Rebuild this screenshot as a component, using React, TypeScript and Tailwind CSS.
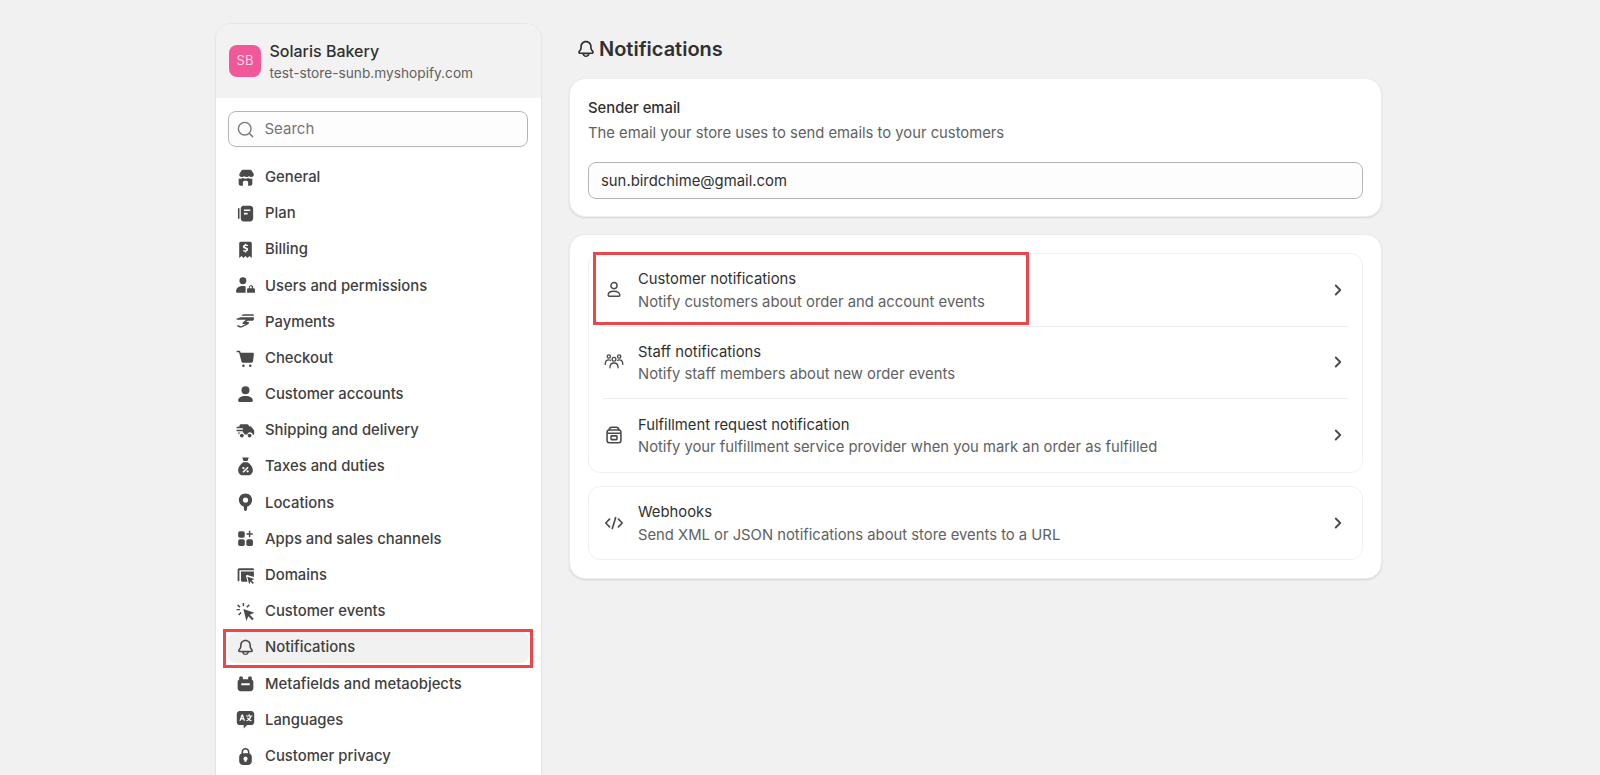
import React from 'react';
import { ChevronRight, Search } from 'lucide-react';

type IconProps = { className?: string };

const Svg = ({ className = 'size-[21px]', children }: IconProps & { children: React.ReactNode }) => (
  <svg viewBox="0 0 20 20" fill="currentColor" fillRule="evenodd" clipRule="evenodd" className={className}>
    {children}
  </svg>
);

const StoreIcon = () => (
  <Svg>
    <path d="M5.600 2.500h8.800c.6 0 1.100.3 1.400.8l2.100 3.400c.3 1.600-.8 2.900-2.300 2.900-.9 0-1.700-.4-2.200-1.100-.5.7-1.400 1.100-2.400 1.100s-1.900-.4-2.400-1.100c-.5.7-1.300 1.100-2.200 1.100-1.500 0-2.600-1.300-2.300-2.900l2.100-3.400c.3-.5.8-.8 1.400-.8Z" />
    <path d="M3.500 11c.5.200 1 .3 1.600.3.900 0 1.700-.3 2.400-.8.700.5 1.600.8 2.500.8s1.800-.3 2.500-.8c.7.500 1.500.8 2.400.8.600 0 1.100-.1 1.600-.3v5c0 1-.8 1.800-1.800 1.800h-2.200v-3.300c0-.8-.7-1.500-1.500-1.500h-2c-.8 0-1.500.7-1.500 1.500v3.300H5.300c-1 0-1.800-.8-1.800-1.800v-5Z" />
  </Svg>
);

const PlanIcon = () => (
  <Svg>
    <path d="M2.800 5.500c0-.4.300-.8.800-.8s.7.400.7.800v9c0 .4-.300.800-.7.800s-.8-.4-.8-.8v-9Z" />
    <path d="M8 2.500h6.500c1.500 0 2.800 1.300 2.800 2.800v9.400c0 1.500-1.300 2.800-2.800 2.800H8c-1.500 0-2.500-1.300-2.500-2.800V5.300c0-1.500 1-2.800 2.500-2.800Zm.500 3.700v1.500h6V6.200h-6Zm0 3.200v1.500h3.500V9.400H8.500Z" />
  </Svg>
);

const BillingIcon = () => (
  <Svg>
    <path d="M5.500 2.500h9c.8 0 1.500.7 1.500 1.500v14l-2.200-1.800-1.900 1.800-1.900-1.800-1.900 1.800-1.900-1.800L4 18V4c0-.8.700-1.500 1.500-1.500Zm3.900 2v.9c-1.100.2-1.900 1-1.900 2 0 1.200 1 1.700 2.100 2 .9.300 1.100.4 1.100.8 0 .3-.3.500-.8.500H7.700v1.300h1.700v.9h1.300v-.9c1.100-.2 1.800-1 1.800-2 0-1.300-1-1.700-2.100-2.100-.9-.3-1.100-.4-1.100-.7 0-.3.300-.5.800-.5h2.200V5.400h-1.600v-.9H9.400Z" />
  </Svg>
);

const UsersIcon = () => (
  <Svg>
    <circle cx="7.500" cy="5.500" r="3.300" />
    <path d="M1 15.500c0-2.900 2.400-5 6.500-5 1 0 1.900.1 2.600.4V17H2.500c-.8 0-1.500-.6-1.500-1.500Z" />
    <path d="M15 9.500c1.300 0 2.300 1 2.300 2.300v.7h.4c.7 0 1.300.5 1.300 1.200V17h-7.500v-3.300c0-.7.600-1.200 1.300-1.200h.4v-.7c0-1.300 1-2.300 2.300-2.300Zm0 1.300c-.5 0-1 .4-1 1v.7h2v-.7c0-.6-.5-1-1-1Z" />
  </Svg>
);

const PaymentsIcon = () => (
  <Svg>
    <path d="M6.500 4c.3-.6.900-1 1.600-1h8.600c.8 0 1.300.5 1.300 1.300v.3H6.300l.2-.6Z" />
    <path d="M5.300 6h12.700v1.800c0 .8-.6 1.400-1.400 1.400h-4.500l-1.400 1.300h1.900c.7 0 1 .6.700 1.200-.4.800-1.200 1.300-2.100 1.600l-4.300 2.200c-.8.400-1.700.4-2.500.1l-2.400-1L2.500 13.300l2.500 1.100c.5.200 1 .2 1.500-.1l3.800-1.900H7.200v-1.300l3.200-2.700H1.500V7.300L5.300 6Z" />
  </Svg>
);

const CartIcon = () => (
  <Svg>
    <path d="M1.500 2.500h2.200c.7 0 1.300.5 1.500 1.200l.2.800h11.600c.6 0 1 .5 1 1.100l-.8 6.800c-.1.900-.9 1.600-1.800 1.600H7.700c-.7 0-1.300-.5-1.500-1.200L3.800 4h-2.300V2.500Z" />
    <circle cx="8" cy="16.800" r="1.200" />
    <circle cx="14.500" cy="16.800" r="1.200" />
  </Svg>
);

const PersonIcon = () => (
  <Svg>
    <circle cx="10" cy="6" r="3.800" />
    <path d="M3 15.800c0-2.500 2.700-4.300 7-4.300s7 1.800 7 4.300c0 .9-.6 1.400-1.300 1.400H4.300c-.7 0-1.300-.5-1.300-1.400Z" />
  </Svg>
);

const TruckIcon = () => (
  <Svg>
    <path d="M5.500 4h6.200c.8 0 1.500.7 1.500 1.500v.5h1.100c.6 0 1.100.3 1.400.7l2.300 2.800c.2.300.3.600.3.900v2.600c0 .6-.5 1-1 1h-.3a2.700 2.700 0 0 0-5.300-.2H9.100a2.700 2.700 0 0 0-5.300 0c-.4-.1-.7-.6-.7-1.100V12h4.400v-1.400H1.500V9.200h6V7.800h-6V6.400h2.600c0-1 .6-2.400 1.400-2.400Z" />
    <circle cx="6.500" cy="14.800" r="1.800" />
    <circle cx="13.900" cy="14.800" r="1.800" />
  </Svg>
);

const TaxIcon = () => (
  <Svg>
    <path d="M7.500 1.500h5c.4 0 .6.400.4.700l-1 2.500H8.100l-1-2.500c-.2-.3 0-.7.400-.7Z" />
    <path d="M7.900 6h4.200C14.600 7.800 17 10.400 17 13.500c0 2.700-1.900 4.800-4.500 4.800h-5C4.900 18.300 3 16.200 3 13.500c0-3.100 2.400-5.700 4.900-7.500Zm4 4.200-4.800 4.800 1 1 4.800-4.800-1-1Zm-3.900.2a1.100 1.100 0 1 0 0 2.200 1.100 1.100 0 0 0 0-2.200Zm4 3.100a1.100 1.100 0 1 0 0 2.200 1.100 1.100 0 0 0 0-2.200Z" />
  </Svg>
);

const PinIcon = () => (
  <Svg>
    <path d="M10 1.500c3.600 0 6.300 2.700 6.300 6.100 0 3.100-2.100 5.300-4.800 6.500v2.100c0 .8-.7 2-1.500 2s-1.500-1.200-1.500-2v-2.100C5.800 12.900 3.700 10.700 3.700 7.600c0-3.400 2.700-6.100 6.300-6.100Zm0 3.700a2.500 2.500 0 1 0 0 5 2.500 2.500 0 0 0 0-5Z" />
  </Svg>
);

const AppsIcon = () => (
  <Svg>
    <rect x="3" y="3" width="6.300" height="6.300" rx="1.700" />
    <rect x="3" y="10.800" width="6.300" height="6.300" rx="1.700" />
    <rect x="10.800" y="10.800" width="6.300" height="6.300" rx="1.700" />
    <path d="M13.200 2.700h1.400V5h2.300v1.400h-2.300v2.300h-1.400V6.400h-2.300V5h2.300V2.700Z" />
  </Svg>
);

const DomainsIcon = () => (
  <Svg>
    <path d="M2.500 4.500c0-.8.700-1.500 1.500-1.500h13c.6 0 1 .4 1 1v1H4.200v9.500c0 .6-.4 1-.8 1-.5 0-.9-.4-.9-1v-10Z" />
    <path d="M5.700 6.300h12.300v5.200l-6.300-1.900c-.7-.2-1.400.5-1.200 1.200l1.400 5.200H7.200c-.8 0-1.500-.7-1.500-1.500V6.300Z" />
    <path d="m11.800 11.200 6.700 2.200-2.800 1.300 2.300 2.200-1.100 1.100-2.200-2.300-1.200 2.800-1.700-7.300Z" />
  </Svg>
);

const EventsIcon = () => (
  <Svg>
    <path d="m8 7.500 10.500 3.800-4.400 1.900 3.700 3.700-1.400 1.400-3.700-3.700-1.900 4.400L8 7.500Z" />
    <path d="M7.300 1.800h1.400v3.200H7.300V1.800ZM1.500 7.500h3.200v1.400H1.500V7.500ZM3 3.200l2.300 2.300-1 1L2 4.200l1-1Zm10 0 1 1-2.300 2.300-1-1L13 3.200ZM5.300 10.500l1 1L4 13.800l-1-1 2.300-2.300Z" />
  </Svg>
);

const BellIcon = ({ className }: IconProps) => (
  <Svg className={className}>
    <path d="M10 2.500c-3 0-5.200 2.300-5.200 5.100v1.300c0 .7-.3 1.300-.7 1.800l-.9 1.100c-.9 1.100-.1 2.700 1.300 2.700h2.200c.2 1.500 1.600 2.700 3.300 2.700s3.100-1.200 3.300-2.700h2.200c1.400 0 2.200-1.600 1.300-2.700l-.9-1.100c-.4-.5-.7-1.100-.7-1.800V7.600c0-2.800-2.200-5.100-5.200-5.100Zm0 1.500c-2.100 0-3.700 1.600-3.700 3.600v1.300c0 1-.4 2-1 2.800l-.9 1c-.1.200 0 .4.200.4h10.800c.2 0 .3-.2.200-.4l-.9-1c-.6-.8-1-1.800-1-2.800V7.600c0-2-1.600-3.600-3.700-3.600ZM8.300 14.800c.2.700.9 1.200 1.700 1.200s1.500-.5 1.700-1.200H8.300Z" />
  </Svg>
);

const MetaIcon = () => (
  <Svg>
    <path d="M5.700 3c1 0 1.800.7 1.800 1.700V6h5V4.700c0-1 .8-1.700 1.800-1.700s1.700.7 1.700 1.700v1.400c.8.400 1.500 1.200 1.500 2.200v6.200c0 1.500-1.300 2.800-2.800 2.800H5.300c-1.500 0-2.800-1.300-2.800-2.800V8.300c0-1 .6-1.800 1.500-2.200V4.700C4 3.700 4.800 3 5.700 3Zm.3 6.800v1.900h8V9.800H6Z" />
  </Svg>
);

const LanguageIcon = () => (
  <Svg>
    <path d="M4.500 2h11C17 2 18.300 3.300 18.300 4.800v7.700c0 1.500-1.300 2.800-2.800 2.800h-4L8.300 18.500v-3.200H4.500c-1.500 0-2.800-1.300-2.800-2.800V4.800C1.700 3.300 3 2 4.500 2Zm1.700 3.200-2 6h1.300l.4-1.200h2l.4 1.200h1.300l-2-6H6.200Zm.7 1.900.6 1.500H6.300l.6-1.500Zm6.100-2v1h-2.500v1.100h3.700c-.2.800-.6 1.400-1 1.900-.4-.3-.7-.7-1-1.100l-.9.500c.3.500.7 1 1.100 1.400-.5.300-1 .6-1.700.8l.4 1c.9-.3 1.600-.7 2.200-1.100.6.500 1.300.8 2.200 1.100l.4-1c-.7-.2-1.200-.5-1.700-.8.7-.7 1.200-1.600 1.400-2.700h.9V6.100H14v-1h-1Z" />
  </Svg>
);

const LockIcon = () => (
  <Svg>
    <path d="M10 1.800c2.200 0 3.800 1.700 3.800 3.800v1.600c1.300.5 2.200 1.700 2.200 3.100v4.200c0 1.900-1.600 3.500-3.500 3.500h-5C5.600 18 4 16.400 4 14.500v-4.200c0-1.400.9-2.600 2.200-3.100V5.600c0-2.100 1.600-3.800 3.800-3.800Zm0 1.500c-1.300 0-2.300 1-2.300 2.300V7h4.600V5.600c0-1.300-1-2.300-2.300-2.300ZM10 10a2 2 0 0 0-1 3.700v1.300h2v-1.300A2 2 0 0 0 10 10Z" />
  </Svg>
);

const PersonOutline = () => (
  <svg viewBox="0 0 20 20" fill="none" stroke="currentColor" strokeWidth="1.300" className="size-[22px]">
    <circle cx="10" cy="6" r="2.800" />
    <path d="M4.700 14.500c0-2 2.200-3.300 5.300-3.300s5.300 1.300 5.300 3.300c0 .8-.4 1.200-1 1.200H5.700c-.6 0-1-.4-1-1.200Z" />
  </svg>
);

const TeamOutline = () => (
  <svg viewBox="0 0 20 20" fill="none" stroke="currentColor" strokeWidth="1.200" strokeLinecap="round" className="size-[22px]">
    <circle cx="5.300" cy="5" r="1.500" />
    <circle cx="14.700" cy="5" r="1.500" />
    <circle cx="10" cy="7.500" r="1.700" />
    <path d="M2 12.200c0-2.300 1.200-4.200 3.300-4.200.5 0 1 .1 1.400.4M18 12.200c0-2.300-1.200-4.200-3.300-4.200-.5 0-1 .1-1.400.4" />
    <path d="M6.300 15.200c0-2.500 1.500-4.300 3.700-4.300s3.700 1.800 3.700 4.300" />
  </svg>
);

const FulfillOutline = () => (
  <svg viewBox="0 0 20 20" fill="none" stroke="currentColor" strokeWidth="1.400" className="size-[22px]">
    <rect x="3.700" y="5.500" width="12.600" height="11.500" rx="2" />
    <path d="M5.500 6c0-1.800 1.200-3 2.500-3h4c1.300 0 2.500 1.200 2.500 3M3.700 8.500h12.600" />
    <rect x="7.300" y="10.800" width="5.400" height="3.400" rx=".5" />
  </svg>
);

const CodeOutline = () => (
  <svg viewBox="0 0 20 20" fill="none" stroke="currentColor" strokeWidth="1.500" strokeLinecap="round" strokeLinejoin="round" className="size-[22px]">
    <path d="M6 6.500 2.500 10 6 13.500M14 6.500l3.500 3.500-3.500 3.500M11.500 5 8.500 15" />
  </svg>
);

const navItems = [
  { label: 'General', icon: <StoreIcon /> },
  { label: 'Plan', icon: <PlanIcon /> },
  { label: 'Billing', icon: <BillingIcon /> },
  { label: 'Users and permissions', icon: <UsersIcon /> },
  { label: 'Payments', icon: <PaymentsIcon /> },
  { label: 'Checkout', icon: <CartIcon /> },
  { label: 'Customer accounts', icon: <PersonIcon /> },
  { label: 'Shipping and delivery', icon: <TruckIcon /> },
  { label: 'Taxes and duties', icon: <TaxIcon /> },
  { label: 'Locations', icon: <PinIcon /> },
  { label: 'Apps and sales channels', icon: <AppsIcon /> },
  { label: 'Domains', icon: <DomainsIcon /> },
  { label: 'Customer events', icon: <EventsIcon /> },
  { label: 'Notifications', icon: <BellIcon className="size-[21px]" />, active: true },
  { label: 'Metafields and metaobjects', icon: <MetaIcon /> },
  { label: 'Languages', icon: <LanguageIcon /> },
  { label: 'Customer privacy', icon: <LockIcon /> },
];

function Sidebar() {
  return (
    <aside className="w-[327px] h-[800px] shrink-0 bg-white rounded-t-2xl border border-[#e6e6e6] shadow-[0_1px_2px_rgba(0,0,0,0.05)] overflow-hidden">
      <div className="h-[74px] bg-[#f2f2f2] flex items-center gap-[8.5px] pl-[13px] pt-[1px]">
        <div className="size-[32px] mb-[2px] rounded-lg bg-[#f0589a] text-[#ffd9e8] text-[13px] flex items-center justify-center">SB</div>
        <div className="pt-[2px]">
          <div className="text-[16px] leading-[22px] font-medium text-[#303030]">Solaris Bakery</div>
          <div className="text-[13.7px] leading-[23px] text-[#616161]">test-store-sunb.myshopify.com</div>
        </div>
      </div>
      <div className="px-[12px] pt-[13px]">
        <div className="h-[36px] w-[300px] rounded-lg border border-[#b5b5b5] bg-[#fdfdfd] flex items-center pl-[6.5px] gap-[10px]">
          <Search className="size-[19px] text-[#7a7a7a]" strokeWidth={1.8} />
          <span className="text-[15px] text-[#757575]">Search</span>
        </div>
      </div>
      <nav className="mt-[12px] px-[12px]">
        {navItems.map((item) => (
          <div key={item.label} className="relative h-[36.2px] flex items-center gap-[9.5px] pl-[6.5px] text-[#4a4a4a]">
            {item.active && <div className="absolute inset-x-[0px] inset-y-[3px] rounded-lg bg-[#f1f1f1]" />}
            <span className="relative flex">{item.icon}</span>
            <span className="relative text-[14.85px] font-medium text-[#404040]">{item.label}</span>
          </div>
        ))}
      </nav>
    </aside>
  );
}

function ListRow({ icon, title, desc, divider, height = 'h-[72.5px]' }: { icon: React.ReactNode; title: string; desc: string; divider?: boolean; height?: string }) {
  return (
    <div className={`${height} flex items-center px-[14px]`}>
      <div className={`h-full flex-1 flex items-center ${divider ? 'border-b border-[#ececec]' : ''}`}>
        <span className="w-[35px] text-[#4a4a4a] flex">{icon}</span>
        <div className="flex-1 pt-[1.5px]">
          <div className="text-[14.8px] leading-[22.5px] text-[#303030]">{title}</div>
          <div className="text-[14.8px] leading-[22.5px] text-[#616161]">{desc}</div>
        </div>
        <ChevronRight className="size-[18px] text-[#4a4a4a] mr-[1px]" strokeWidth={2.4} />
      </div>
    </div>
  );
}

function Content() {
  return (
    <main className="w-[813px] ml-[27px] shrink-0">
      <div className="h-[78px] pt-[35px] pl-[5.5px] flex items-start gap-[2.5px]">
        <BellIcon className="size-[22px] text-[#303030] mt-[3px]" />
        <h1 className="text-[20px] leading-[28px] font-semibold text-[#303030]">Notifications</h1>
      </div>
      <section className="h-[139px] rounded-2xl bg-white border border-[#ececec] shadow-[0_1px_2px_rgba(0,0,0,0.12)] px-[18px] pt-[18px]">
        <div className="text-[14.8px] leading-[23px] font-medium text-[#303030]">Sender email</div>
        <div className="text-[14.8px] leading-[26px] text-[#616161]">The email your store uses to send emails to your customers</div>
        <div className="mt-[16px] h-[37px] rounded-lg border border-[#b5b5b5] bg-[#fdfdfd] flex items-center px-[12px] pt-[1px] text-[14.85px] text-[#303030]">
          sun.birdchime@gmail.com
        </div>
      </section>
      <section className="mt-[17px] h-[345px] rounded-2xl bg-white border border-[#ececec] shadow-[0_1px_2px_rgba(0,0,0,0.12)] px-[18px] pt-[18px]">
        <div className="rounded-xl border border-[#f0f0f0]">
          <ListRow icon={<PersonOutline />} title="Customer notifications" desc="Notify customers about order and account events" divider />
          <ListRow icon={<TeamOutline />} title="Staff notifications" desc="Notify staff members about new order events" divider />
          <ListRow icon={<FulfillOutline />} title="Fulfillment request notification" desc="Notify your fulfillment service provider when you mark an order as fulfilled" />
        </div>
        <div className="mt-[13px] rounded-xl border border-[#f0f0f0]">
          <ListRow icon={<CodeOutline />} title="Webhooks" desc="Send XML or JSON notifications about store events to a URL" height="h-[72.5px]" />
        </div>
      </section>
    </main>
  );
}

export default function App() {
  return (
    <div className="relative h-[775px] overflow-hidden bg-[#f1f1f1] pl-[215px] font-['Inter',sans-serif]">
      <div className="flex items-start">
        <div className="pt-[23px]">
          <Sidebar />
        </div>
        <Content />
      </div>
      <div className="absolute left-[223px] top-[629px] w-[310px] h-[39px] border-[3px] border-[#e8474c] pointer-events-none" />
      <div className="absolute left-[593px] top-[252px] w-[436px] h-[73px] border-[3px] border-[#e8474c] pointer-events-none" />
    </div>
  );
}
